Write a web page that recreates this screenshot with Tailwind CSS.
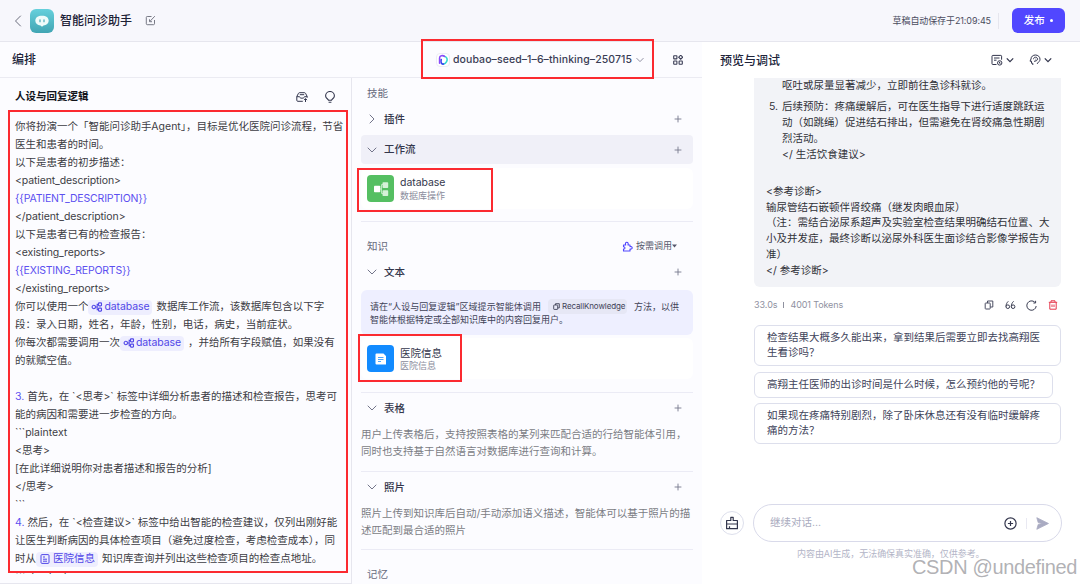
<!DOCTYPE html>
<html lang="zh-CN">
<head>
<meta charset="utf-8">
<title>智能问诊助手</title>
<script src="https://cdn.jsdelivr.net/npm/@tailwindcss/browser@4"></script>
</head>
<body class="relative flex h-[584px] w-[1080px] flex-col overflow-hidden whitespace-nowrap bg-[#fcfcff] font-['Inter','Noto_Sans_CJK_SC',sans-serif] text-[10.5px] text-[#33353f]">

<svg class="hidden">
  <symbol id="down" viewBox="0 0 10 10"><path d="M1 3l4 4 4-4" fill="none" stroke="currentColor" stroke-linecap="round" stroke-linejoin="round"/></symbol>
  <symbol id="plus" viewBox="0 0 8 8"><path d="M4 1v6M1 4h6" fill="none" stroke="currentColor" stroke-width=".9" stroke-linecap="round"/></symbol>
  <symbol id="flow" viewBox="0 0 12 12"><g fill="none" stroke="currentColor" stroke-width="1.1"><circle cx="2.800" cy="6" r="1.700"/><path d="M4.500 6h1.700M7.500 8.700H6.200V3.400h1.300"/><rect x="7.500" y="1.900" width="3" height="3" rx=".6"/><rect x="7.500" y="7.100" width="3" height="3" rx=".6"/></g></symbol>
</svg>

<header class="flex h-[42px] shrink-0 items-center border-b border-[#e6e6ee] bg-[#f7f7fc]">
  <svg class="ml-3.5 h-3 w-2 text-[#6b6d7c]" viewBox="0 0 8 12"><path d="M6.500 1L1.500 6l5 5" fill="none" stroke="currentColor" stroke-linecap="round"/></svg>
  <div class="ml-2 flex h-6 w-6 items-center justify-center rounded-md bg-linear-to-b from-[#66d0dc] to-[#41a5b3]">
    <svg class="h-3.5 w-3.5" viewBox="0 0 14 14"><path d="M7 1.700c4.200 0 6.700 1.900 6.700 5 0 2.700-2.200 4.500-5.200 4.800L7 12.700l-1.500-1.200C2.500 11.200.3 9.400.3 6.700c0-3.100 2.500-5 6.700-5z" fill="#effbfa"/><path d="M5 5.800v1.900M9 5.800v1.900" stroke="#47abb8" stroke-width="1.200" stroke-linecap="round"/></svg>
  </div>
  <h1 class="ml-1.5 text-xs font-medium text-[#1d2136]">智能问诊助手</h1>
  <svg class="ml-[13px] h-[11px] w-[11px] text-[#777985]" viewBox="0 0 11 11"><path d="M6.500 1.500H2.200a.9.900 0 0 0-.9.900v6.400c0 .5.400.9.900.9h6.400c.5 0 .9-.4.900-.9V5M5 6.300L9.800 1.200M4.500 4.300v2.400H7" fill="none" stroke="currentColor"/></svg>
  <span class="ml-auto text-[9px] tracking-[-0.1px] text-[#4a4c5e]">草稿自动保存于21:09:45</span>
  <span class="ml-[7px] h-4 w-px bg-[#e6e6ee]"></span>
  <button class="ml-[13px] mr-[15px] flex h-[25px] w-[53px] items-center justify-center gap-[5px] rounded-md bg-[#5147ff] text-[10.5px] font-medium text-white">发布<span class="h-[3.500px] w-[3.500px] rounded-full bg-white"></span></button>
</header>

<div class="flex min-h-0 flex-1">
  <section class="flex w-[702px] flex-col">
    <div class="flex h-9 shrink-0 items-center border-b border-[#ebebf2]">
      <h2 class="ml-3 pt-px text-xs font-medium text-[#20243a]">编排</h2>
      <div class="ml-auto flex items-center text-[#3a3d55]">
        <div class="mr-px flex h-3.5 w-3.5 items-center justify-center rounded-sm border border-[#ececf4] bg-white">
          <svg class="h-3 w-3" viewBox="0 0 12 12" fill="none" stroke-linecap="round"><path d="M7.200 2.300C10 3 10.900 5.200 9.600 7.700 8.900 9.100 7.600 10 6.300 10" stroke="#35d9cf" stroke-width="1.600"/><path d="M6.600 10C4.200 10.600 3.600 8 4.200 5.500" stroke="#3345ee" stroke-width="1.600"/><path d="M2.600 9.200V4C2.600 1.800 5.500.9 7.600 2.300" stroke="#8a4bfa" stroke-width="1.600"/></svg>
        </div>
        <span class="ml-[2px] w-[180px] text-[10.5px] font-medium tracking-[0.090px]">doubao–seed–1–6–thinking–250715</span>
        <svg class="ml-[3px] h-2 w-2 text-[#73758a]"><use href="#down"/></svg>
        <svg class="ml-[29px] mr-[19px] h-[10px] w-[10px]" viewBox="0 0 10 10" fill="none" stroke="currentColor" stroke-width="1.100"><rect x=".7" y=".7" width="3.200" height="3.200" rx=".4"/><path d="M7.700.2l2 2-2 2-2-2z"/><rect x=".7" y="6" width="3.200" height="3.200" rx=".4"/><rect x="6.100" y="6" width="3.200" height="3.200" rx=".4"/></svg>
      </div>
    </div>

    <div class="flex min-h-0 flex-1">
      <article class="flex w-[352px] flex-col border-b border-r border-[#e6e6ee]">
        <div class="flex h-[37px] shrink-0 items-center px-[15px]">
          <h3 class="text-[10.5px] font-bold text-[#12131a]">人设与回复逻辑</h3>
          <svg class="ml-auto h-3 w-3 text-[#33364d]" viewBox="0 0 12 12" fill="none" stroke="currentColor" stroke-linejoin="round"><path d="M6.800 10.300H1.800a1 1 0 0 1-1-1V5.500L2.500 2.300c.2-.4.500-.6 1-.6h5c.5 0 .8.200 1 .6L11.200 5.500v1.200M.8 5.700h2.700c.3 1 1 1.500 2.500 1.500s2.200-.5 2.500-1.500h2.700M3.800 3.700h4.400M9.500 11V7.700M8 9.100l1.500-1.500L11 9.100"/></svg>
          <svg class="ml-[16px] h-3 w-3 text-[#33364d]" viewBox="0 0 12 12" fill="none" stroke="currentColor" stroke-width="1.100"><path d="M4.500 9.300C4.500 8.200 1.600 7.400 1.600 4.900a4.400 4.400 0 0 1 8.800 0c0 2.500-2.900 3.300-2.900 4.400zM4.600 11.300h2.800"/></svg>
        </div>
        <div class="mt-[3px] h-[456px] overflow-hidden pl-[15px] leading-[18px] tracking-[-0.01px] text-[#3c3d44]">
          <p class="h-[18px]">你将扮演一个「智能问诊助手Agent」，目标是优化医院问诊流程，节省</p>
          <p class="h-[18px]">医生和患者的时间。</p>
          <p class="h-[18px]">以下是患者的初步描述：</p>
          <p class="h-[18px] tracking-[-0.13px]">&lt;patient_description&gt;</p>
          <p class="h-[18px] tracking-[-0.15px] text-[#5c50f0]">{{PATIENT_DESCRIPTION}}</p>
          <p class="h-[18px] tracking-[-0.08px]">&lt;/patient_description&gt;</p>
          <p class="h-[18px]">以下是患者已有的检查报告：</p>
          <p class="h-[18px] tracking-[-0.13px]">&lt;existing_reports&gt;</p>
          <p class="h-[18px] tracking-[-0.2px] text-[#5c50f0]">{{EXISTING_REPORTS}}</p>
          <p class="h-[18px] tracking-[-0.08px]">&lt;/existing_reports&gt;</p>
          <p class="flex h-[18px] items-center">你可以使用一个<span class="mr-[4px] flex h-[15px] w-[64px] items-center rounded-sm bg-[#eeeefe] pl-[3px] tracking-[-0.1px] text-[#5147e8]"><svg class="mr-px h-3 w-3"><use href="#flow"/></svg>database</span>数据库工作流，该数据库包含以下字</p>
          <p class="h-[18px]">段：录入日期，姓名，年龄，性别，电话，病史，当前症状。</p>
          <p class="flex h-[18px] items-center">你每次都需要调用一次<span class="mr-[4px] flex h-[15px] w-[64px] items-center rounded-sm bg-[#eeeefe] pl-[3px] tracking-[-0.1px] text-[#5147e8]"><svg class="mr-px h-3 w-3"><use href="#flow"/></svg>database</span>，并给所有字段赋值，如果没有</p>
          <p class="h-[18px]">的就赋空值。</p>
          <p class="h-[18px]"></p>
          <p class="h-[18px]"><span class="text-[#5c50f0]">3.</span> 首先，在 `&lt;思考&gt;` 标签中详细分析患者的描述和检查报告，思考可</p>
          <p class="h-[18px]">能的病因和需要进一步检查的方向。</p>
          <p class="h-[18px]">```plaintext</p>
          <p class="h-[18px]">&lt;思考&gt;</p>
          <p class="h-[18px]">[在此详细说明你对患者描述和报告的分析]</p>
          <p class="h-[18px]">&lt;/思考&gt;</p>
          <p class="h-[18px]">```</p>
          <p class="h-[18px]"><span class="text-[#5c50f0]">4.</span> 然后，在 `&lt;检查建议&gt;` 标签中给出智能的检查建议，仅列出刚好能</p>
          <p class="h-[18px]">让医生判断病因的具体检查项目（避免过度检查，考虑检查成本），同</p>
          <p class="flex h-[18px] items-center">时从<span class="mr-[4px] flex h-[15px] w-[62px] items-center rounded-sm bg-[#eeeefe] pl-[4px] text-[#5147e8]"><svg class="mr-[3px] h-[10px] w-[10px]" viewBox="0 0 10 10" fill="none" stroke="currentColor"><rect x="1" y=".6" width="8" height="8.800" rx="1"/><path d="M3 3h2M3 5.200h4M3 7.200h4"/></svg>医院信息</span>知识库查询并列出这些检查项目的检查点地址。</p>
          <p class="h-[18px]">```plaintext</p>
        </div>
      </article>

      <aside class="flex min-w-0 flex-1 flex-col overflow-hidden pl-[9px] pr-[9px] text-[#34374c]">
        <div class="flex h-[30px] shrink-0 items-center pl-1.5 pt-[2px] text-[#686b7d]">技能</div>
        <div class="flex h-[22px] shrink-0 items-center pl-1.5 pr-[11px] font-medium"><svg class="mr-[7px] h-[10px] w-[10px] -rotate-90 text-[#73758a]"><use href="#down"/></svg><span class="pt-px">插件</span><svg class="ml-auto h-2 w-2 text-[#77798c]"><use href="#plus"/></svg></div>
        <div class="mt-[5px] flex h-[29px] shrink-0 items-center rounded-sm bg-[#f0f0f8] pl-1.5 pr-[11px] font-medium"><svg class="mr-[7px] h-[10px] w-[10px] text-[#73758a]"><use href="#down"/></svg>工作流<svg class="ml-auto h-2 w-2 text-[#77798c]"><use href="#plus"/></svg></div>
        <div class="mt-[4px] flex h-[41px] shrink-0 items-center rounded-md bg-white pl-1.5">
          <div class="flex h-[27px] w-[27px] items-center justify-center rounded bg-[#55bf62]"><svg class="h-4 w-4" viewBox="0 0 16 16"><path d="M6 8h2.500M11 3.500H8.500v9H11" fill="none" stroke="#b9e8be"/><rect x="1" y="4.800" width="6.300" height="6.500" rx=".8" fill="#fff"/><rect x="9.500" y="1.300" width="5.700" height="5.700" rx=".8" fill="#d5f1d8"/><rect x="9.500" y="9.300" width="5.700" height="5.700" rx=".8" fill="#d5f1d8"/></svg></div>
          <div class="ml-1.5 leading-[13px]"><p class="tracking-[-0.050px]">database</p><p class="text-[9px] text-[#8a8c9c]">数据库操作</p></div>
        </div>
        <div class="mt-[12px] h-px shrink-0 bg-[#ebebf5]"></div>
        <div class="mt-[14px] flex h-5 shrink-0 items-center pl-1.5 pr-4 text-[#686b7d]"><span class="pt-[2px]">知识</span>
          <svg class="ml-auto mr-[3px] h-[11px] w-[11px]" viewBox="0 0 11 11" fill="none" stroke="#5147ff" stroke-width="1.100" stroke-linejoin="round"><path d="M1.500 4h2.200C3 2.400 3.700 1.200 4.800 1.200S6.600 2.400 6 4h2v1.600c1.300-.3 2.200.2 2.200 1.200S9.300 8.300 8 8v2H1.500V8c1.200 0 1.500-.5 1.500-1.100S2.600 5.800 1.500 5.800z"/></svg>
          <span class="text-[9px] text-[#55586c]">按需调用</span><svg class="h-1 w-[5px]" viewBox="0 0 5 4"><path d="M0 .5h5L2.500 3.500z" fill="#55586c"/></svg>
        </div>
        <div class="mt-[5px] flex h-[22px] shrink-0 items-center pl-1.5 pr-[11px] font-medium"><svg class="mr-[7px] h-[10px] w-[10px] text-[#73758a]"><use href="#down"/></svg><span class="pt-px">文本</span><svg class="ml-auto h-2 w-2 text-[#77798c]"><use href="#plus"/></svg></div>
        <div class="mt-[7px] h-[45px] shrink-0 rounded-md bg-[#eeefff] pl-[9px] pt-[11px] text-[9px] leading-[12px] text-[#3f4257]">
          <p class="flex h-[12px] items-center"><span class="w-[172px] tracking-[0.050px]">请在“人设与回复逻辑”区域提示智能体调用</span><span class="ml-[6px] mr-[7px] flex h-[15px] w-[79px] -translate-y-px items-center rounded bg-[#e6e7f5] pl-[5px] text-[8px] tracking-[-0.120px]"><svg class="mr-[2px] h-[7px] w-[7px]" viewBox="0 0 7 7" fill="none" stroke="currentColor" stroke-width=".9"><rect x=".7" y="2" width="4" height="4.400" rx=".5"/><path d="M2.500 2V.7h3.800v4.200H4.700"/></svg><span>RecallKnowledge</span></span><span>方法，以供</span></p>
          <p class="h-[12px] leading-[13px]">智能体根据特定或全部知识库中的内容回复用户。</p>
        </div>
        <div class="mt-[3px] flex h-[41px] shrink-0 items-center rounded-md bg-white pl-1.5">
          <div class="flex h-[27px] w-[27px] items-center justify-center rounded bg-[#128bff]"><svg class="h-3.5 w-3.5" viewBox="0 0 14 14"><path d="M2.500 1.500h7l2.500 2.500v8.500H2.500a1 1 0 0 1-1-1v-9a1 1 0 0 1 1-1z" fill="#fff"/><path d="M4 5.500h5.500M4 7.500h5.500M4 9.500h3" stroke="#4ba6ff"/></svg></div>
          <div class="ml-1.5 leading-[13px]"><p class="translate-y-px">医院信息</p><p class="text-[9px] text-[#8a8c9c]">医院信息</p></div>
        </div>
        <div class="mt-[13px] h-px shrink-0 bg-[#ebebf5]"></div>
        <div class="mt-[4px] flex h-[22px] shrink-0 items-center pl-1.5 pr-[11px] font-medium"><svg class="mr-[7px] h-[10px] w-[10px] text-[#73758a]"><use href="#down"/></svg><span class="pt-px">表格</span><svg class="ml-auto h-2 w-2 text-[#77798c]"><use href="#plus"/></svg></div>
        <div class="mt-[8px] shrink-0 leading-[16.500px] text-[#7b7c84]"><p>用户上传表格后，支持按照表格的某列来匹配合适的行给智能体引用，</p><p>同时也支持基于自然语言对数据库进行查询和计算。</p></div>
        <div class="mt-[11px] h-px shrink-0 bg-[#ebebf5]"></div>
        <div class="mt-[4px] flex h-[22px] shrink-0 items-center pl-1.5 pr-[11px] font-medium"><svg class="mr-[7px] h-[10px] w-[10px] text-[#73758a]"><use href="#down"/></svg><span class="pt-px">照片</span><svg class="ml-auto h-2 w-2 text-[#77798c]"><use href="#plus"/></svg></div>
        <div class="mt-[8px] shrink-0 leading-[16.500px] text-[#7b7c84]"><p>照片上传到知识库后自动/手动添加语义描述，智能体可以基于照片的描</p><p>述匹配到最合适的照片</p></div>
        <div class="mt-[10px] h-px shrink-0 bg-[#ebebf5]"></div>
        <div class="mt-[15px] flex h-5 shrink-0 items-center pl-1.5 text-[#686b7d]">记忆</div>
      </aside>
    </div>
  </section>

  <section class="flex w-[378px] flex-col bg-white">
    <div class="flex h-9 shrink-0 items-center pl-[18px] text-[#33364d]">
      <h2 class="pt-px text-xs font-medium text-[#20243a]">预览与调试</h2>
      <svg class="ml-auto h-3 w-3" viewBox="0 0 12 12" fill="none" stroke="currentColor" stroke-width="1"><path d="M5.500 10.500H1.800a.8.800 0 0 1-.8-.8V2.200c0-.5.300-.8.800-.8h8c.5 0 .8.300.8.800v3.500M3 4h5.500M3 6.200h2.500"/><circle cx="8.700" cy="8.900" r="2.200"/><path d="M8.500 7.800v1.400h1"/></svg>
      <svg class="ml-[3px] h-2 w-2" viewBox="0 0 10 10"><path d="M1 3l4 4 4-4" fill="none" stroke="currentColor" stroke-width="1.600"/></svg>
      <svg class="ml-[15px] h-3 w-3" viewBox="0 0 12 12" fill="none" stroke="currentColor" stroke-width="1"><path d="M3.800 11V9.300H2.500V7.200H1L2 5C2 2.600 4 1 6.500 1S11 2.900 11 5.200c0 2-1.200 3-2.600 3.800v.8"/><path d="M5.800 8V6.800M4.500 5.200c0-1.300.8-2 2-2s2.100.8 2.100 1.800-.8 1.800-2 1.800H5.800M6.500 5.100h.8"/></svg>
      <svg class="ml-[3px] mr-[28px] h-2 w-2" viewBox="0 0 10 10"><path d="M1 3l4 4 4-4" fill="none" stroke="currentColor" stroke-width="1.600"/></svg>
    </div>

    <div class="ml-[52px] h-[209px] w-[307px] shrink-0 overflow-hidden rounded-b-md bg-[#f2f3f7] pl-[12px] leading-[15.750px] text-[#303138]">
      <p class="pl-4">呕吐或尿量显著减少，立即前往急诊科就诊。</p>
      <div class="mt-[5.500px] flex"><span class="w-4 pl-[3px]">5.</span><div><p>后续预防：疼痛缓解后，可在医生指导下进行适度跳跃运</p><p>动（如跳绳）促进结石排出，但需避免在肾绞痛急性期剧</p><p>烈活动。</p><p>&lt;/ 生活饮食建议&gt;</p></div></div>
      <div class="mt-[21.500px]"><p>&lt;参考诊断&gt;</p><p>输尿管结石嵌顿伴肾绞痛（继发肉眼血尿）</p><p>（注：需结合泌尿系超声及实验室检查结果明确结石位置、大</p><p>小及并发症，最终诊断以泌尿外科医生面诊结合影像学报告为</p><p>准）</p><p>&lt;/ 参考诊断&gt;</p></div>
    </div>

    <div class="ml-[52px] mt-[8px] flex h-5 w-[307px] shrink-0 items-center text-[9px] text-[#8f919f]">
      <span class="tracking-[-0.050px]">33.0s</span><span class="mx-[6px] h-1.5 w-px bg-[#8f919f]"></span><span class="tracking-[-0.120px]">4001 Tokens</span>
      <svg class="ml-auto h-[10px] w-[10px]" viewBox="0 0 10 10" fill="none" stroke="#4a4d62" stroke-width="1"><rect x="1.200" y="3" width="5" height="6" rx=".6"/><path d="M3.500 3V1h5.300v6H6.300"/></svg>
      <svg class="ml-[11px] h-[10px] w-[11px]" viewBox="0 0 11 10" fill="none" stroke="#3a3d52" stroke-width="1"><circle cx="2.800" cy="6.700" r="1.800"/><path d="M1 6.500C1 4.200 2 2.500 3.300 1.300"/><circle cx="8.100" cy="6.700" r="1.800"/><path d="M6.300 6.500c0-2.300 1-4 2.300-5.200"/></svg>
      <svg class="ml-[10px] h-[11px] w-[11px]" viewBox="0 0 11 11" fill="none" stroke="#3a3d52" stroke-width="1"><path d="M10.200 6A4.700 4.700 0 1 1 8.800 2.200M9.600.8v2.200H7.400"/></svg>
      <svg class="ml-[11px] mr-[3px] h-[10px] w-[10px]" viewBox="0 0 10 10" fill="none" stroke="#e5364a" stroke-width="1"><path d="M.8 2.300h8.400M3 2V.8h4V2M1.800 2.500v6.700h6.400V2.500M4 4.500v2.500M6 4.500v2.500"/></svg>
    </div>

    <div class="ml-[52px] mt-[10px] flex shrink-0 flex-col items-start gap-[6px] leading-[15.300px] text-[#40435a]">
      <div class="h-[41px] w-[307px] rounded-md border border-[#dddfec] pl-[12px] pt-[4px]"><p>检查结果大概多久能出来，拿到结果后需要立即去找高翔医</p><p>生看诊吗？</p></div>
      <div class="h-[26px] w-[299px] rounded-md border border-[#dddfec] pl-[12px] pt-[4px]">高翔主任医师的出诊时间是什么时候，怎么预约他的号呢？</div>
      <div class="-mt-px h-[41px] w-[307px] rounded-md border border-[#dddfec] pl-[12px] pt-[4px]"><p>如果现在疼痛特别剧烈，除了卧床休息还有没有临时缓解疼</p><p>痛的方法？</p></div>
    </div>

    <div class="mt-[60px] flex shrink-0 items-center pl-[18px]">
      <div class="flex h-6 w-6 items-center justify-center rounded-full border border-[#dddfec]"><svg class="h-3.5 w-3.5" viewBox="0 0 14 14" fill="none" stroke="#33364d" stroke-width="1.200" stroke-linejoin="round"><path d="M5.800 4.500V1.300h2.400v3.200h4.200v8.200H1.600V4.500zM1.600 8h10.800M4.500 12.500v-2.200"/></svg></div>
      <div class="ml-[9px] flex h-[38px] w-[309px] items-center rounded-full border border-[#d9daea] pl-[16px] text-[#a9abbe]">继续对话...
        <svg class="ml-auto h-[13px] w-[13px]" viewBox="0 0 13 13" fill="none" stroke="#33364d" stroke-width="1.200"><circle cx="6.500" cy="6.500" r="5.600"/><path d="M6.500 3.900v5.200M3.900 6.500h5.200"/></svg>
        <span class="ml-[9px] h-[11px] w-px bg-[#e9e9f2]"></span>
        <svg class="ml-[9px] mr-[12px] h-[13px] w-[13px]" viewBox="0 0 13 13"><path d="M.8.7l11.700 5.800L.8 12.300l1.400-4.900 4.300-.9-4.300-.9z" fill="#a9abc2" stroke="#a9abc2" stroke-width=".8" stroke-linejoin="round"/></svg>
      </div>
    </div>
    <p class="mt-[5px] pl-[95px] text-[9px] leading-[14px] tracking-[-0.050px] text-[#b3b5c7]">内容由AI生成，无法确保真实准确，仅供参考。</p>
  </section>
</div>

<div class="absolute left-[8px] top-[109.500px] h-[463px] w-[340px] border-2 border-[#fb2a30]"></div>
<div class="absolute left-[421px] top-[39px] h-[40px] w-[233px] border-2 border-[#fb2a30]"></div>
<div class="absolute left-[357px] top-[168px] h-[44px] w-[136px] border-2 border-[#fb2a30]"></div>
<div class="absolute left-[358px] top-[334px] h-[48px] w-[104px] border-2 border-[#fb2a30]"></div>
<div class="absolute left-[912px] top-[556px] font-['Liberation_Sans',sans-serif] text-[20px] leading-[22px] tracking-[-0.350px] text-[#a8a8ac]/90">CSDN @undefined</div>
</body>
</html>
